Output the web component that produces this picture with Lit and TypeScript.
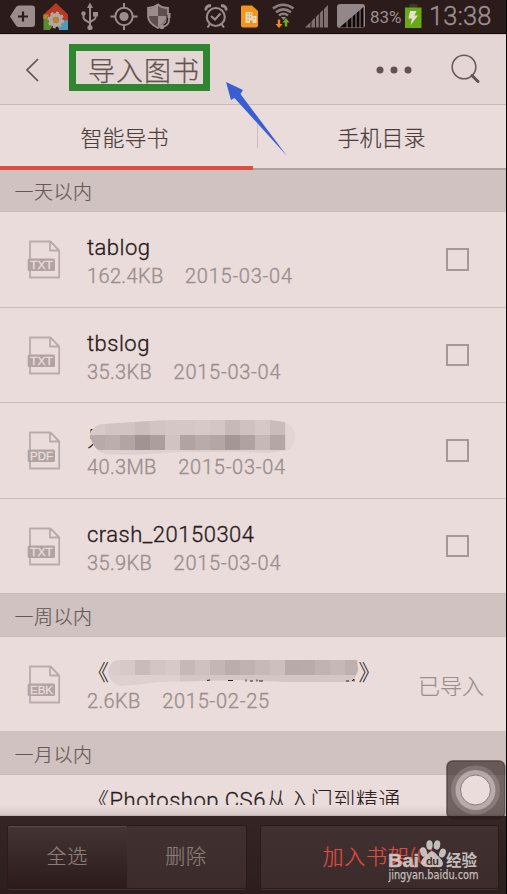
import { LitElement, html, svg, css, nothing } from "lit";
import { customElement, property } from "lit/decorators.js";

type Book = {
  kind: string;
  title: string;
  size: string;
  date: string;
  state: "box" | "done" | "none";
  mask?: "a" | "b";
  cjk?: boolean;
};

const TODAY: Book[] = [
  { kind: "TXT", title: "tablog", size: "162.4KB", date: "2015-03-04", state: "box" },
  { kind: "TXT", title: "tbslog", size: "35.3KB", date: "2015-03-04", state: "box" },
  { kind: "PDF", title: "只", size: "40.3MB", date: "2015-03-04", state: "box", mask: "a", cjk: true },
  { kind: "TXT", title: "crash_20150304", size: "35.9KB", date: "2015-03-04", state: "box" },
];
const WEEK: Book[] = [
  { kind: "EBK", title: "《", size: "2.6KB", date: "2015-02-25", state: "done", mask: "b", cjk: true },
];

const TOP_A = ["#d6c9c8", "#d1c4c3", "#d2c4c3", "#cabdbc", "#d1c4c3", "#d4c7c6", "#d4c7c6", "#d6c9c8", "#d3c6c5", "#c7b9b8", "#cfc1c0", "#d5c8c7", "#cabcbb"];
const LOW_A = ["#b8aaa9", "#bcaeac", "#b2a4a2", "#a09392", "#ab9e9d", "#d1c3c2", "#b1a3a2", "#b9abaa", "#b4a6a5", "#a49695", "#b0a2a1", "#c6b8b7", "#b4a6a5"];
const ROW_B = ["#d9cccb", "#d6c9c8", "#c8bbba", "#d2c5c4", "#d6c9c8", "#c5b8b7", "#cec1c0", "#c4b6b5", "#bbadac", "#c0b2b1", "#c6b9b8", "#ccbfbe", "#b8aaa9", "#b9abaa", "#c1b3b2", "#c5b8b7", "#bdb0af"];

@customElement("status-bar")
class StatusBar extends LitElement {
  static styles = css`
    :host { display: block; height: 34px; background: linear-gradient(#2b1c1b 0 33px, #100808 33px); }
    svg { display: block; }
    .clock { font: 300 25.500px Roboto, sans-serif; fill: #9d8f8e; stroke: #9d8f8e; stroke-width: .4; }
    .pct { font: 400 16.500px Roboto, sans-serif; fill: #9d8f8e; }
  `;
  render() {
    return html`<svg width="506" height="34" viewBox="0 0 506 34">
      <path d="M10 16.5 16 7q1-1.5 3-1.500H32q3 0 3 3V24q0 3-3 3H19q-2 0-3-1.500Z" fill="#9b8d8b" />
      <path d="M23 11.500V21.500M18 16.500H28" stroke="#2b1c1b" stroke-width="2.200" />
      <path d="M43.500 14.500 56 3 68 14.500V22L56 17 43.500 18Z" fill="#b63a24" />
      <path d="M43.500 16 56 20 50 30H43.500Z" fill="#5b8b2c" />
      <path d="M68 20V30H59L57 21Z" fill="#4d9cb7" />
      <path d="M43.500 14.500H49L46 19H43.500Z" fill="#b78425" />
      <circle cx="55.800" cy="20" r="5" fill="none" stroke="#b2a5a2" stroke-width="4" />
      <circle cx="55.800" cy="20" r="7.400" fill="none" stroke="#b2a5a2" stroke-width="2" stroke-dasharray="3 2.810" />
      <circle cx="55.800" cy="20" r="3.200" fill="#b6852f" />
      <g stroke="#9b8d8b" fill="none" stroke-width="2">
        <path d="M90 5V28M83.500 13V18Q84 20 90 23M95.500 14V17.500Q96 19 90 22" />
        <g fill="#9b8d8b" stroke="none"><path d="M90 2.500 93 8H87Z" /><circle cx="90" cy="27.500" r="2.600" /><circle cx="83.500" cy="13.500" r="2.200" /><path d="M93 12H98V16.500H93Z" /></g>
        <circle cx="124" cy="16.500" r="8.700" /><circle cx="124" cy="16.500" r="4.600" fill="#9b8d8b" stroke="none" />
        <path d="M124 3V8M124 25V30M110.500 16.500H115.500M132.500 16.500H137.500" />
      </g>
      <path d="M158 4.500Q153 8 148 8V16Q148 23 158 28Q168 23 168 16V8Q162 8 158 4.500Z" fill="#5d504e" stroke="#9b8d8b" stroke-width="1.800" />
      <path d="M158 5V16H149V9Q154 8 158 5ZM158 16H167Q166 22 158 27Z" fill="#9b8d8b" />
      <path d="M169 15V20Q169 25 164 27" stroke="#2b1c1b" stroke-width="5" fill="none" />
      <path d="M169 14V20Q169 25 163 27" stroke="#9b8d8b" stroke-width="1.800" fill="none" />
      <circle cx="162" cy="27" r="2.300" fill="#9b8d8b" /><path d="M167.500 13H170.500V18H167.500Z" fill="#9b8d8b" />
      <g fill="none" stroke="#9b8d8b" stroke-width="2.100">
        <circle cx="215.800" cy="17" r="9" /><path d="M211 16 215 19.500 220.500 13.500M210 24 207.500 27.500M221.500 24 224 27.500" />
        <path d="M206 10.500Q205 6 211 5.500M226 10.500Q227 6 221 5.500" stroke-width="2.800" />
      </g>
      <path d="M242 5.500H252L258 11V25.500Q258 27.500 256 27.500H243Q241 27.500 241 25.500V7.500Q241 5.500 242 5.500Z" fill="#f39517" />
      <path d="M245.500 12H252.500V16H256.500V23H245.500Z" fill="#e8d9c4" />
      <path d="M247.500 14H248.700M250 14H251.200M247.500 17H248.700M250 17H251.200M247.500 20H248.700M253.500 18.500H254.700" stroke="#f08c14" stroke-width="1.500" />
      <path d="M250 23V20.500H252.500V23Z" fill="#f08c14" />
      <g fill="none" stroke="#8d7f7d" stroke-width="2.500">
        <path d="M273 8.500Q283 1 293.500 8.500M276 12.200Q283.500 6.500 291 12.200M279 15.500Q283.500 12 288 15.500" />
      </g>
      <path d="M281 17H286L283.500 20Z" fill="#9b8d8b" />
      <path d="M277.800 19.500H280.200V24H282.500L279 28 275.500 24H277.800Z" fill="#f08a1c" />
      <path d="M284.800 26.500H287.200V22.500H289.500L286 18 282.500 22.500H284.800Z" fill="#6eb01a" />
      <path d="M305 27.500 328 5V27.500Z" fill="#7d706e" />
      <path d="M311 5V28M315.500 5V28M319.300 5V28M323.500 5V28" stroke="#2b1c1b" stroke-width="1" />
      <rect x="337" y="4" width="28" height="24" rx="3" fill="#94878a" />
      <path d="M339.500 27.500 363.500 7V27.500Z" fill="#120707" />
      <path d="M347 20V28M352 16V28M356 12V28M360 9V28" stroke="#94878a" stroke-width="1" />
      <text class="pct" x="370" y="22.800" textLength="31.500" lengthAdjust="spacingAndGlyphs">83%</text>
      <rect x="409.500" y="4" width="8" height="4" fill="#42352d" />
      <rect x="405" y="7.500" width="16.500" height="20.500" fill="#69a913" />
      <path d="M410 11H416.500L414.500 15.500H418L410.500 25 412 18.500H408.500Z" fill="#e6dfd6" />
      <text class="clock" x="429" y="25.200" textLength="62.500">13:38</text>
    </svg>`;
  }
}

@customElement("book-row")
class BookRow extends LitElement {
  @property({ attribute: false }) book!: Book;
  static styles = css`
    :host { display: flex; height: 95.500px; box-sizing: border-box; border-bottom: 1.500px solid #cabcbb; align-items: flex-start; position: relative; font-family: Roboto, "Noto Sans CJK SC", sans-serif; }
    :host(.last) { height: 94px; border-bottom: 0; }
    .icon { margin: 27px 0 0 27px; width: 34px; height: 42px; flex: none; }
    .kind { font: 400 11.500px "Liberation Sans", sans-serif; fill: #e9dcdb; stroke: #e9dcdb; stroke-width: .3; }
    .body { margin: 20px 0 0 26px; flex: 1; white-space: nowrap; }
    .title { font-size: 22px; line-height: 31px; height: 31px; color: #2b1c1b; letter-spacing: .5px; font-weight: 300; -webkit-text-stroke: .35px #2b1c1b; }
    .cjk { font-family: "Noto Sans CJK SC", sans-serif; font-weight: 300; letter-spacing: .5px; line-height: 26px; -webkit-text-stroke: .1px #2b1c1b; }
    .meta { display: flex; gap: 21.500px; font-size: 20px; line-height: 26px; color: #9b8e8d; letter-spacing: .35px; font-weight: 300; -webkit-text-stroke: .35px #9b8e8d; }
    .date { letter-spacing: .75px; }
    .check { width: 18.500px; height: 18.500px; border: 2px solid #a69897; margin: 36px 37.500px 0 0; }
    .done { font: 300 22px/30px "Noto Sans CJK SC", sans-serif; color: #9b8e8d; margin: 32px 22px 0 0; -webkit-text-stroke: .2px #9b8e8d; }
    .mask { position: absolute; left: 88px; top: 15px; }
    .gap { display: inline-block; width: 249px; }
  `;
  private maskA() {
    return svg`<svg class="mask" width="210" height="42" viewBox="88 418 210 42">
      <defs><clipPath id="a"><path d="M90 434Q94 424 105 424L135 422Q165 420 180 420H270L284 422Q295 427 295 436Q295 445 288 450L270 453 240 452 180 452 130 455 105 454Q92 449 90 434Z" /></clipPath></defs>
      <g clip-path="url(#a)"><rect x="88" y="418" width="210" height="42" fill="#ddd0cf" /><rect x="285" y="418" width="13" height="42" fill="#e2d5d4" />
      ${TOP_A.map((c, i) => svg`<rect x=${90 + i * 15} y="418" width="15.200" height="17.200" fill=${c} />`)}
      ${LOW_A.map((c, i) => svg`<rect x=${90 + i * 15} y="435" width="15.200" height="15" fill=${c} />`)}
      </g></svg>`;
  }
  private maskB() {
    return svg`<svg class="mask" width="290" height="42" viewBox="88 652 290 42">
      <defs><clipPath id="b"><path d="M108 672Q110 660 121 660H357L358 670 355 678 353 682 290 682 240 680 160 682 135 685 120 686Q109 682 108 672Z" /></clipPath></defs>
      <g clip-path="url(#b)"><rect x="88" y="652" width="290" height="42" fill="#ddd0cf" />
      ${ROW_B.map((c, i) => svg`<rect x=${105 + i * 15} y="659" width="15.200" height="16" fill=${c} />`)}
      <path d="M180 675H358V683H180Z" fill="#d3c6c5" /></g>
      <path d="M207 680.500 210 680M228 680.500H233M246 679.500V681.500M250 681H253M257 679.500V681.500M259 681H263M346 681H349M352 681 354 679V681.500" stroke="#2b1c1b" stroke-width="1" fill="none" />
    </svg>`;
  }
  render() {
    const b = this.book;
    return html`
      <svg class="icon" viewBox="0 0 34 42">
        <path d="M3 2.500H23.500L32.200 11.500V38.500H3ZM23 3V11.500H32" fill="none" stroke="#b9abaa" stroke-width="1.800" stroke-linejoin="round" />
        <rect x="0.700" y="19.500" width="27.300" height="12.500" rx="1.500" fill="#b1a3a2" />
        <text class="kind" x="3" y="30" textLength="23" lengthAdjust="spacingAndGlyphs">${b.kind}</text>
      </svg>
      <div class="body">
        <div class="title ${b.cjk ? "cjk" : ""}">${b.title}${b.mask === "b" ? html`<span class="gap"></span>》` : nothing}</div>
        <div class="meta"><span>${b.size}</span><span class="date">${b.date}</span></div>
      </div>
      ${b.mask === "a" ? this.maskA() : b.mask === "b" ? this.maskB() : nothing}
      ${b.state === "box" ? html`<div class="check"></div>` : html`<div class="done">已导入</div>`}`;
  }
}

@customElement("app-root")
class AppRoot extends LitElement {
  static styles = css`
    :host { display: block; width: 507px; height: 894px; box-sizing: border-box; border-right: 1px solid #000; background: #e9dcdb; position: relative; overflow: hidden; font-family: "Noto Sans CJK SC", sans-serif; font-weight: 300; }
    .page { display: flex; flex-direction: column; height: 894px; }
    .page > * { flex: none; }
    .head { height: 71px; box-sizing: border-box; background: #e3d6d5; border-top: 1px solid #d2c4c4; border-bottom: 1.500px solid #c7bab9; display: flex; align-items: center; }
    .back { margin-left: 24px; width: 16px; }
    .title { margin: -5px 0 0 29px; box-sizing: border-box; width: 141px; height: 47px; border: 7px solid #2f862f; padding-left: 12px; font-size: 27px; line-height: 37px; letter-spacing: 1px; color: #63524e; white-space: nowrap; -webkit-text-stroke: .25px #63524e; }
    .dots { margin-left: 166px; }
    .find { margin-left: 37px; margin-top: -2px; }
    .tabs { display: flex; height: 65px; box-sizing: border-box; border-bottom: 2px solid #aea1a0; position: relative; }
    .tab { width: 247px; text-align: center; font-size: 22px; line-height: 62px; color: #4b3e3c; -webkit-text-stroke: .2px #4b3e3c; }
    .first { width: 258px; box-sizing: border-box; padding-right: 9px; background: linear-gradient(#cabdbb, #cabdbb) right 17px / 1px 26px no-repeat; }
    .line { position: absolute; left: 0; bottom: -2px; width: 253px; height: 4px; background: #de4d40; }
    .sect { box-sizing: border-box; height: 42px; background: #cfc2c1; padding-left: 14.500px; font-size: 19px; line-height: 42px; color: #675755; letter-spacing: .5px; border-bottom: 1px solid #c9bcbb; -webkit-text-stroke: .2px #675755; }
    .week { height: 43px; line-height: 44px; }
    .month { height: 44px; line-height: 45px; }
    .cut { height: 30px; overflow: hidden; padding-left: 87px; white-space: nowrap; font-family: Roboto, "Noto Sans CJK SC", sans-serif; font-size: 22px; font-weight: 300; line-height: 52px; color: #2b1c1b; letter-spacing: .5px; -webkit-text-stroke: .3px #2b1c1b; }
    .cut span { font-family: "Noto Sans CJK SC", sans-serif; font-weight: 300; line-height: 1; -webkit-text-stroke: .1px #2b1c1b; }
    .shade { height: 11px; background: linear-gradient(#e9dcdb, #dacdcc 80%, #bdb0ae); }
    .bar { flex: 1; display: flex; box-sizing: border-box; padding: 10px 8px 6px; gap: 15px; background: linear-gradient(#352625, #2c1e1d); }
    .pair, .add { display: flex; flex: 1; border-radius: 2px; box-shadow: 0 0 0 1px #2b1c1b, 0 2px 0 #41312f; }
    .btn { flex: 1; text-align: center; font-size: 20px; line-height: 59px; letter-spacing: 1px; color: #8c7d7b; background: linear-gradient(#403130, #3b2c2b); border-radius: 2px; -webkit-text-stroke: .2px; }
    .on { background: linear-gradient(#443534, #2b1c1b); box-shadow: inset 0 1px #5b4a48; }
    .red { color: #e34b41; font-size: 21px; letter-spacing: .7px; }
    .arrow { position: absolute; left: 220px; top: 76px; }
    .touch { position: absolute; left: 446px; top: 760px; }
    .mark { position: absolute; left: 380px; top: 834px; opacity: .85; }
    .wm { font: 700 19px "Liberation Sans", sans-serif; fill: #dcd6d5; stroke: #dcd6d5; stroke-width: .4; }
    .wmc { font: 700 16px "Noto Sans CJK SC", sans-serif; fill: #dcd6d5; }
    .url { font: 400 11.500px "DejaVu Sans", sans-serif; fill: #dcd6d5; stroke: #dcd6d5; stroke-width: .25; }
    .du { font: 700 11px "Liberation Sans", sans-serif; fill: #44302f; }
  `;
  render() {
    return html`
      <div class="page">
        <status-bar></status-bar>
        <div class="head">
          <svg class="back" height="26" viewBox="0 0 16 26"><path d="M14 2 3 13 14 24" fill="none" stroke="#63524f" stroke-width="1.700" /></svg>
          <div class="title">导入图书</div>
          <svg class="dots" width="36" height="8"><circle cx="4" cy="4" r="3.500" fill="#63524f" /><circle cx="18" cy="4" r="3.500" fill="#63524f" /><circle cx="32" cy="4" r="3.500" fill="#63524f" /></svg>
          <svg class="find" width="34" height="32" viewBox="0 0 34 32"><circle cx="15" cy="14" r="11.800" fill="none" stroke="#6b5a57" stroke-width="1.600" /><path d="M23 22.500 29 28.500" stroke="#63524f" stroke-width="3" stroke-linecap="round" /></svg>
        </div>
        <div class="tabs"><div class="tab first">智能导书</div><div class="tab">手机目录</div><div class="line"></div></div>
        <div class="sect">一天以内</div>
        ${TODAY.map((b) => html`<book-row .book=${b}></book-row>`)}
        <div class="sect week">一周以内</div>
        ${WEEK.map((b) => html`<book-row class="last" .book=${b}></book-row>`)}
        <div class="sect month">一月以内</div>
        <div class="cut"><span>《</span>Photoshop CS6<span>从入门到精通</span></div>
        <div class="shade"></div>
        <div class="bar">
          <div class="pair"><div class="btn on">全选</div><div class="btn">删除</div></div>
          <div class="add"><div class="btn red">加入书架(0)</div></div>
        </div>
      </div>
      <svg class="arrow" width="70" height="84" viewBox="220 76 70 84"><path d="M226 82 243 90 240.500 94 287 156 234.500 98 231 100Z" fill="#385ed2" /></svg>
      <svg class="touch" width="60" height="60"><rect x=".8" y=".8" width="58" height="58" rx="6" fill="#2b1c1b" fill-opacity=".63" stroke="#2b1c1b" stroke-opacity=".45" stroke-width="1.600" />
        <circle cx="29.500" cy="30" r="24.500" fill="#e9dcdb" fill-opacity=".2" /><circle cx="29.500" cy="30" r="20" fill="#e9dcdb" fill-opacity=".5" /><circle cx="29.500" cy="30" r="15" fill="#e9dcdb" stroke="#8c7d7c" stroke-width="1" /></svg>
      <svg class="mark" width="110" height="50" viewBox="380 834 110 50">
        <text class="wm" x="388" y="866.500" textLength="31" lengthAdjust="spacingAndGlyphs">Bai</text>
        <g fill="#dcd6d5"><ellipse cx="423.500" cy="852" rx="3.300" ry="4.800" transform="rotate(-15 423.500 852)" /><ellipse cx="429.500" cy="845" rx="3.200" ry="4.700" /><ellipse cx="437" cy="845" rx="3.200" ry="4.700" transform="rotate(12 437 845)" /><ellipse cx="442.500" cy="853" rx="3.200" ry="4.600" transform="rotate(20 442.500 853)" />
        <path d="M427.500 854Q432 848 437 855Q443 860 443 864Q442 868 437 867H426Q421 866 421 862Q422 858 427.500 854Z" /></g>
        <text class="du" x="426" y="865" textLength="13">du</text>
        <text class="wmc" x="446" y="866" textLength="31" lengthAdjust="spacingAndGlyphs">经验</text>
        <text class="url" x="388.500" y="879" textLength="90" lengthAdjust="spacingAndGlyphs">jingyan.baidu.com</text>
      </svg>`;
  }
}
